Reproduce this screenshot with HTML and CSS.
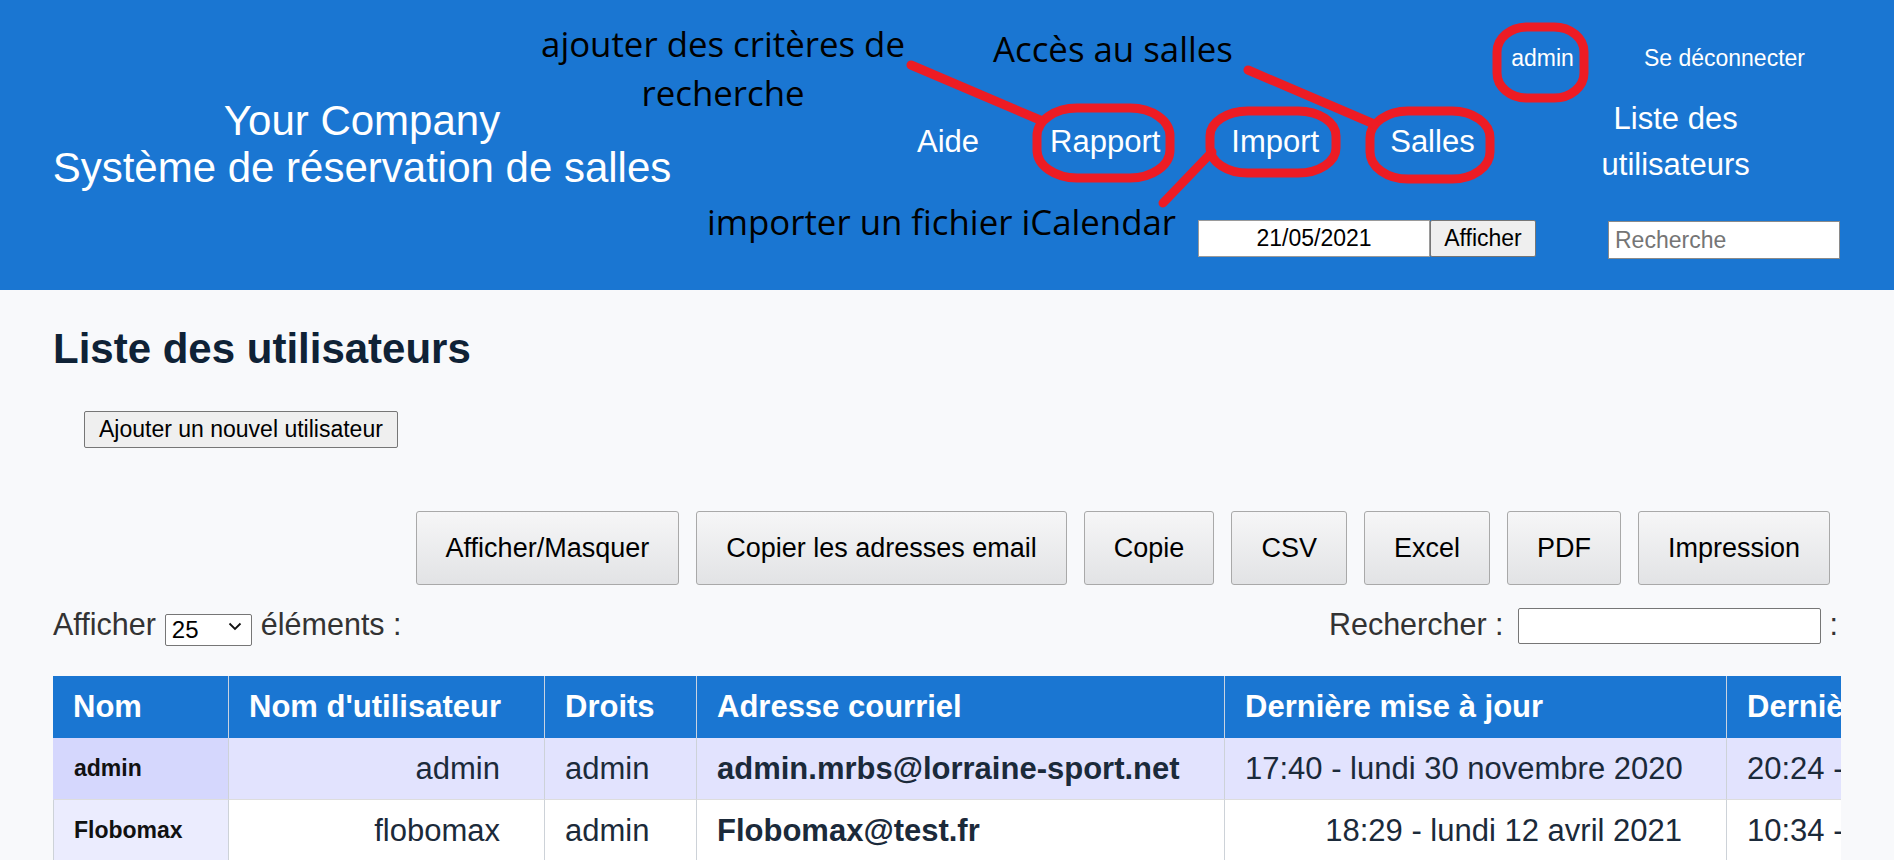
FILE: index.html
```html
<!DOCTYPE html>
<html lang="fr">
<head>
<meta charset="utf-8">
<title>Liste des utilisateurs</title>
<link rel="stylesheet" href="styles.css">
</head>
<body>
<header class="top">
  <div class="brand">
    <div>Your Company</div>
    <div>Système de réservation de salles</div>
  </div>
  <div class="bar">
    <div class="userrow">
      <a class="ulink">admin</a>
      <a class="ulink">Se déconnecter</a>
    </div>
    <nav class="navrow">
      <a class="nlink">Aide</a>
      <a class="nlink">Rapport</a>
      <a class="nlink">Import</a>
      <a class="nlink">Salles</a>
      <a class="nlink wraplink">Liste des utilisateurs</a>
    </nav>
    <div class="formrow">
      <form class="datef">
        <input class="dateinp" type="text" value="21/05/2021">
        <button class="showbtn" type="button">Afficher</button>
      </form>
      <input class="searchinp" type="text" placeholder="Recherche">
    </div>
  </div>

  <div class="notes">
    <svg class="marks" width="1894" height="290" viewBox="0 0 1894 290">
      <g fill="none" stroke="#ed1c24" stroke-width="9" stroke-linecap="round">
        <rect x="1497" y="27" width="87" height="71" rx="30" ry="25"/>
        <rect x="1037" y="108" width="133" height="70" rx="40" ry="28"/>
        <rect x="1210" y="111" width="126" height="62" rx="38" ry="25"/>
        <rect x="1370" y="111" width="120" height="68" rx="38" ry="27"/>
        <line x1="911" y1="65" x2="1040" y2="120"/>
        <line x1="1248" y1="70" x2="1374" y2="124"/>
        <line x1="1212" y1="152" x2="1163" y2="203"/>
      </g>
    </svg>
    <div class="note n1">ajouter des critères de<br>recherche</div>
    <div class="note n2">Accès au salles</div>
    <div class="note n3">importer un fichier iCalendar</div>
  </div>
</header>

<main class="content">
  <h2 class="title">Liste des utilisateurs</h2>
  <div class="addrow"><button class="addbtn" type="button">Ajouter un nouvel utilisateur</button></div>

  <div class="dtbuttons">
    <button class="dtbtn" type="button">Afficher/Masquer</button>
    <button class="dtbtn" type="button">Copier les adresses email</button>
    <button class="dtbtn" type="button">Copie</button>
    <button class="dtbtn" type="button">CSV</button>
    <button class="dtbtn" type="button">Excel</button>
    <button class="dtbtn" type="button">PDF</button>
    <button class="dtbtn" type="button">Impression</button>
  </div>

  <div class="filterrow">
    <label class="lenlbl">Afficher
      <span class="selwrap">
        <select class="lensel"><option>25</option><option>50</option><option>100</option></select>
        <svg class="chev" width="14" height="9" viewBox="0 0 14 9"><path d="M1.5 1.5 L7 7 L12.5 1.5" fill="none" stroke="#111" stroke-width="1.8"/></svg>
      </span>
      éléments :</label>
    <label class="findlbl">Rechercher :<input class="findinp" type="text"> :</label>
  </div>

  <div class="tablewrap">
    <table class="users">
      <colgroup>
        <col class="c1"><col class="c2"><col class="c3"><col class="c4"><col class="c5"><col class="c6">
      </colgroup>
      <thead>
        <tr>
          <th>Nom</th>
          <th>Nom d'utilisateur</th>
          <th>Droits</th>
          <th>Adresse courriel</th>
          <th>Dernière mise à jour</th>
          <th>Dernière connexion</th>
        </tr>
      </thead>
      <tbody>
        <tr class="odd">
          <td class="name">admin</td>
          <td class="r">admin</td>
          <td>admin</td>
          <td class="mail">admin.mrbs@lorraine-sport.net</td>
          <td class="r">17:40 - lundi 30 novembre 2020</td>
          <td>20:24 - jeudi 20 mai 2021</td>
        </tr>
        <tr class="even">
          <td class="name">Flobomax</td>
          <td class="r">flobomax</td>
          <td>admin</td>
          <td class="mail">Flobomax@test.fr</td>
          <td class="r">18:29 - lundi 12 avril 2021</td>
          <td>10:34 - vendredi 21 mai 2021</td>
        </tr>
      </tbody>
    </table>
  </div>
</main>
</body>
</html>
```

FILE: styles.css
```css
* { box-sizing: border-box; }

html, body {
  margin: 0;
  padding: 0;
}

body {
  background: #f8f9fb;
  font-family: "Liberation Sans", Arial, sans-serif;
  color: #1b2a3a;
  overflow: hidden;
}

/* ---------- header ---------- */
.top {
  position: relative;
  display: flex;
  height: 290px;
  background: #1a76d2;
  color: #ffffff;
}

.brand {
  width: 724px;
  display: flex;
  flex-direction: column;
  justify-content: center;
  text-align: center;
  font-size: 42px;
  line-height: 47px;
  padding-bottom: 2px;
}

.bar {
  flex: 1;
  padding-top: 45px;
}

.userrow {
  display: flex;
  justify-content: flex-end;
  gap: 70px;
  padding-right: 89px;
  font-size: 23px;
  line-height: 27px;
  height: 27px;
}

.ulink { color: #ffffff; }

.navrow {
  display: flex;
  align-items: center;
  height: 92px;
  margin-top: 24px;
  padding-left: 193px;
  font-size: 31px;
  line-height: 46px;
}

.nlink {
  color: #ffffff;
  margin-right: 71px;
  white-space: nowrap;
}

.wraplink {
  white-space: normal;
  width: 220px;
  margin-left: 20px;
  margin-right: 0;
  text-align: center;
}

.formrow {
  display: flex;
  align-items: flex-start;
  margin-top: 32px;
  padding-left: 474px;
}

.datef {
  display: flex;
  margin: 0;
}

.dateinp {
  width: 232px;
  height: 37px;
  border: 1px solid #9a9a9a;
  background: #ffffff;
  font-family: "Liberation Sans", Arial, sans-serif;
  font-size: 23px;
  color: #000000;
  text-align: center;
  padding: 0 4px;
  margin: 0;
}

.showbtn {
  width: 106px;
  height: 37px;
  border: 1px solid #767676;
  border-radius: 2px;
  background: #efefef;
  font-family: "Liberation Sans", Arial, sans-serif;
  font-size: 23px;
  color: #000000;
  padding: 0;
  margin: 0;
}

.searchinp {
  width: 232px;
  height: 38px;
  margin-left: 72px;
  margin-top: 1px;
  border: 1px solid #8a8a8a;
  background: #ffffff;
  font-family: "Liberation Sans", Arial, sans-serif;
  font-size: 23px;
  padding: 0 6px;
  color: #000;
}

.searchinp::placeholder { color: #757575; }

/* annotations drawn over the header */
.notes {
  position: absolute;
  left: 0;
  top: 0;
  width: 1894px;
  height: 290px;
  pointer-events: none;
}

.marks {
  position: absolute;
  left: 0;
  top: 0;
}

.note {
  position: absolute;
  font-family: "Segoe UI", "Open Sans", sans-serif;
  font-size: 34.8px;
  line-height: 40px;
  color: #000000;
  white-space: nowrap;
}

.n1 {
  left: 423px;
  top: 19px;
  width: 600px;
  text-align: center;
  line-height: 49px;
}

.n2 {
  left: 993px;
  top: 29px;
}

.n3 {
  left: 707px;
  top: 202px;
}

/* ---------- content ---------- */
.content {
  padding: 0 53px;
}

.title {
  margin: 35px 0 0;
  font-size: 42px;
  line-height: 47px;
  font-weight: bold;
  color: #0f2236;
}

.addrow {
  margin-top: 39px;
  padding-left: 31px;
}

.addbtn {
  height: 37px;
  padding: 0 14px;
  border: 1px solid #767676;
  border-radius: 2px;
  background: #efefef;
  font-family: "Liberation Sans", Arial, sans-serif;
  font-size: 23px;
  color: #000000;
}

.dtbuttons {
  display: flex;
  justify-content: flex-end;
  gap: 17px;
  margin-top: 63px;
  padding-right: 11px;
}

.dtbtn {
  height: 74px;
  padding: 0 29px;
  border: 1px solid #a9a9a9;
  border-radius: 3px;
  background: linear-gradient(to bottom, #f6f6f7 0%, #e2e3e5 100%);
  font-family: "Liberation Sans", Arial, sans-serif;
  font-size: 27px;
  color: #000000;
  white-space: nowrap;
}

.filterrow {
  display: flex;
  justify-content: space-between;
  align-items: center;
  height: 40px;
  margin-top: 21px;
  font-size: 30.5px;
  color: #333333;
}

.lenlbl, .findlbl {
  display: flex;
  align-items: center;
  gap: 9px;
  margin-top: -4px;
}

.selwrap {
  position: relative;
  display: inline-block;
  width: 87px;
  height: 32px;
  margin-top: 4px;
}

.lensel {
  appearance: none;
  -webkit-appearance: none;
  width: 87px;
  height: 32px;
  font-family: "Liberation Sans", Arial, sans-serif;
  font-size: 24px;
  color: #000;
  background: #ffffff;
  border: 1px solid #767676;
  border-radius: 2px;
  padding: 0 6px;
  margin: 0;
}

.chev {
  position: absolute;
  right: 10px;
  top: 12px;
  pointer-events: none;
}

.findlbl {
  padding-right: 3px;
}

.findinp {
  width: 303px;
  height: 36px;
  margin-left: 5px;
  margin-top: 4px;
  border: 1px solid #767676;
  border-radius: 2px;
  background: #ffffff;
  font-size: 22px;
}

.tablewrap {
  margin-top: 30px;
  overflow: hidden;
  width: 100%;
}

.users {
  table-layout: fixed;
  border-collapse: separate;
  border-spacing: 0;
  width: 2175px;
}

.c1 { width: 175px; }
.c2 { width: 316px; }
.c3 { width: 152px; }
.c4 { width: 528px; }
.c5 { width: 502px; }
.c6 { width: 502px; }

.users th {
  height: 62px;
  padding: 0 44px 0 20px;
  background: #1a76d2;
  color: #ffffff;
  font-size: 31px;
  font-weight: bold;
  text-align: left;
  white-space: nowrap;
  overflow: hidden;
  border-left: 1px solid #c9d3e1;
}

.users th:first-child { border-left: none; }

.users td {
  height: 62px;
  padding: 0 44px 0 20px;
  font-size: 31px;
  color: #1b2a3a;
  white-space: nowrap;
  overflow: hidden;
  border-left: 1px solid #cdd2d8;
  border-bottom: 1px solid #dddddd;
}

.users td.r { text-align: right; }

.users td.name {
  font-size: 23px;
  font-weight: bold;
  color: #111111;
  border-left: 1px solid #cdd2d8;
}

.users td.mail { font-weight: bold; }

.users tr.odd td { background: #e2e3fe; }
.users tr.odd td.name { background: #d5d7fd; border-left-color: #d5d7fd; }
.users tr.even td { background: #ffffff; }
.users tr.even td.name { background: #ebecfe; }
```
